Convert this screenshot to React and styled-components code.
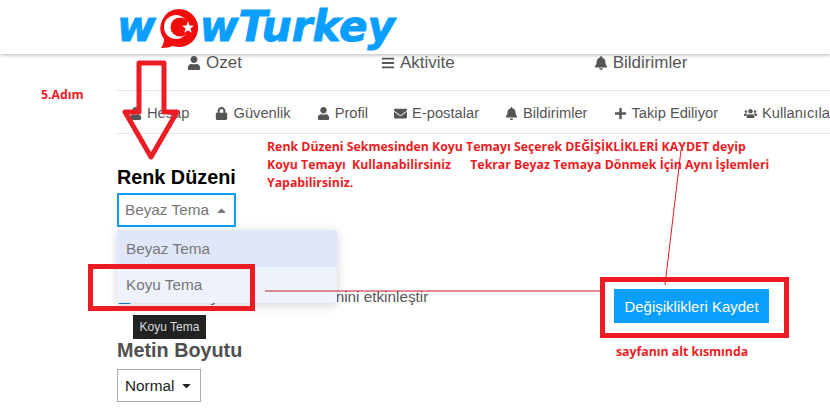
import styled, { createGlobalStyle } from "styled-components";
import { FaUser, FaBars, FaBell, FaLock, FaEnvelope, FaPlus, FaUsers, FaCaretUp, FaCaretDown, FaInfo } from "react-icons/fa";

const GlobalStyle = createGlobalStyle`
  html, body {
    margin: 0;
    padding: 0;
    background: #fff;
    font-family: "Liberation Sans", Arial, sans-serif;
  }
`;

const Page = styled.div`
  position: relative;
  width: 830px;
  height: 418px;
  overflow: hidden;
  background: #fff;
`;

const Header = styled.header`
  height: 54px;
  padding-left: 117px;
  display: flex;
  align-items: center;
  box-shadow: 0 1px 4px rgba(0, 0, 0, 0.3);
`;

const Logo = styled.div`
  display: flex;
  align-items: center;
  color: #0a9eff;
  font-family: "DejaVu Sans", sans-serif;
  font-size: 42px;
  font-weight: 700;
  font-style: italic;
  line-height: 50px;
  -webkit-text-stroke: 1px #0a9eff;
`;

const LogoMark = styled.svg`
  flex-shrink: 0;
  margin-top: 1px;
`;

const TabBar = styled.nav`
  height: 35px;
  padding: 1px 0 0 187px;
  display: flex;
  gap: 139px;
  white-space: nowrap;
`;

const Tab = styled.div`
  display: flex;
  align-items: center;
  gap: 5px;
  height: 15px;
  color: #555;
  font-size: 17px;

  svg {
    font-size: 14px;
  }
`;

const SubBar = styled.nav`
  margin-left: 117px;
  height: 40px;
  padding: 2px 0 0 12px;
  display: flex;
  align-items: center;
  gap: 26px;
  border-top: 1px solid #e6e6e6;
  border-bottom: 1px solid #e6e6e6;
  white-space: nowrap;
`;

const SubItem = styled.div`
  display: flex;
  align-items: center;
  gap: 5px;
  color: #555;
  font-size: 14.7px;

  svg {
    flex-shrink: 0;
    font-size: 13px;
  }
`;

const Main = styled.main`
  display: flex;
  justify-content: space-between;
  padding: 33px 61px 0 117px;
`;

const Settings = styled.div`
  display: flex;
  flex-direction: column;
  align-items: flex-start;
`;

const SaveColumn = styled.div`
  padding-top: 122px;
`;

const Heading = styled.h2`
  margin: 0 0 ${(p) => (p.$muted ? "9px" : "6px")};
  font-size: 19.8px;
  font-weight: 700;
  line-height: 20px;
  color: ${(p) => (p.$muted ? "#4f4f4f" : "#000")};
`;

const Select = styled.div`
  position: relative;
  box-sizing: border-box;
  display: inline-flex;
  align-items: center;
  gap: 6px;
  height: ${(p) => (p.$open ? "34px" : "33px")};
  padding: 0 ${(p) => (p.$open ? "6px" : "7px")};
  font-size: 15.3px;
  color: ${(p) => (p.$open ? "#777" : "#222")};
  border: ${(p) => (p.$open ? "2px solid #0a9eff" : "1px solid #aaa")};

  svg {
    font-size: 13px;
  }
`;

const Menu = styled.ul`
  position: absolute;
  top: 35px;
  left: -2px;
  width: 220px;
  margin: 0;
  padding: 0;
  list-style: none;
  box-shadow: 0 2px 10px rgba(0, 0, 0, 0.18);
  z-index: 2;
`;

const MenuItem = styled.li`
  height: ${(p) => (p.$active ? "37px" : "36px")};
  padding-left: 9px;
  display: flex;
  align-items: center;
  font-size: 15.3px;
  color: #777;
  background: ${(p) => (p.$active ? "#e1e7fa" : "#eef2fd")};
`;

const OptionRow = styled.div`
  display: flex;
  align-items: center;
  gap: 4px;
  margin-top: 62px;
  height: 16px;
  font-size: 15.3px;
  color: #555;
  white-space: nowrap;
`;

const Checkbox = styled.span`
  width: 13px;
  height: 14px;
  margin-left: 1px;
  border-radius: 2px;
  background: #0a7fe0;
`;

const Section = styled.section`
  margin-top: 35px;
`;

const Tooltip = styled.div`
  position: absolute;
  left: 133px;
  top: 315px;
  width: 73px;
  height: 24px;
  display: flex;
  align-items: center;
  justify-content: center;
  font-size: 12px;
  color: #ddd;
  background: #222;
  z-index: 3;
`;

const SaveButton = styled.button`
  display: block;
  width: 155px;
  height: 34px;
  padding: 0;
  border: 0;
  color: #fff;
  background: #0a9eff;
  font-family: "Liberation Sans", Arial, sans-serif;
  font-size: 15px;
`;

const Note = styled.div`
  position: absolute;
  left: ${(p) => p.$x}px;
  top: ${(p) => p.$y}px;
  color: #ed1c24;
  font-family: "Open Sans", sans-serif;
  font-size: 12.3px;
  font-weight: 700;
  line-height: 18px;
  white-space: pre;
  z-index: 5;
`;

const RedBox = styled.div`
  position: absolute;
  box-sizing: border-box;
  left: ${(p) => p.$x}px;
  top: ${(p) => p.$y}px;
  width: ${(p) => p.$w}px;
  height: ${(p) => p.$h}px;
  border: 5px solid #ed1c24;
  z-index: 4;
`;

const Overlay = styled.svg`
  position: absolute;
  left: 0;
  top: 0;
  z-index: 4;
  pointer-events: none;
`;

const tabs = [
  [FaUser, "Ozet"],
  [FaBars, "Aktivite"],
  [FaBell, "Bildirimler"],
  [FaInfo, ""],
];

const subItems = [
  [FaUser, "Hesap"],
  [FaLock, "Güvenlik"],
  [FaUser, "Profil"],
  [FaEnvelope, "E-postalar"],
  [FaBell, "Bildirimler"],
  [FaPlus, "Takip Ediliyor"],
  [FaUsers, "Kullanıcılar"],
];

function LogoBubble() {
  return (
    <LogoMark width="44" height="40" viewBox="0 0 44 40">
      <path d="M23 1a19 19 0 1 1-6 37c-3 1-7 2-12 2 2-3 3-6 3-9A19 19 0 0 1 23 1z" fill="#f20d0d" stroke="none" />
      <circle cx="20" cy="19" r="12" fill="#fff" />
      <circle cx="24" cy="19" r="9.5" fill="#f20d0d" />
      <path d="M32 13l1.5 4.5 4.5.2-3.6 2.7 1.3 4.4-3.7-2.6-3.7 2.6 1.3-4.4-3.6-2.7 4.5-.2z" fill="#fff" />
    </LogoMark>
  );
}

export default function App() {
  return (
    <Page>
      <GlobalStyle />
      <Header>
        <Logo>
          w<LogoBubble />wTurkey
        </Logo>
      </Header>
      <TabBar>
        {tabs.map(([Icon, label], i) => (
          <Tab key={i}>
            <Icon />
            {label}
          </Tab>
        ))}
      </TabBar>
      <SubBar>
        {subItems.map(([Icon, label]) => (
          <SubItem key={label}>
            <Icon />
            {label}
          </SubItem>
        ))}
      </SubBar>
      <Main>
        <Settings>
          <Heading>Renk Düzeni</Heading>
          <Select $open>
            Beyaz Tema
            <FaCaretUp />
            <Menu>
              <MenuItem $active>Beyaz Tema</MenuItem>
              <MenuItem>Koyu Tema</MenuItem>
            </Menu>
          </Select>
          <OptionRow>
            <Checkbox />
            Tam ekran yazı alanı tüm metnini etkinleştir
          </OptionRow>
          <Section>
            <Heading $muted>Metin Boyutu</Heading>
            <Select>
              Normal
              <FaCaretDown />
            </Select>
          </Section>
        </Settings>
        <SaveColumn>
          <SaveButton>Değişiklikleri Kaydet</SaveButton>
        </SaveColumn>
      </Main>

      <Tooltip>Koyu Tema</Tooltip>

      <RedBox $x={88} $y={264} $w={167} $h={47} />
      <RedBox $x={600} $y={277} $w={189} $h={61} />

      <Overlay width="830" height="418" viewBox="0 0 830 418">
        <path d="M139 63h25v49h13l-26 45-26-45h14z" fill="none" stroke="#ed1c24" strokeWidth="5" strokeLinejoin="round" />
        <line x1="265" y1="291" x2="600" y2="291" stroke="#c0202a" strokeWidth="1" />
        <line x1="681" y1="150" x2="665" y2="285" stroke="#ed1c24" strokeWidth="1" />
      </Overlay>

      <Note $x={41} $y={86}>5.Adım</Note>
      <Note $x={267} $y={138}>
        {"Renk Düzeni Sekmesinden Koyu Temayı Seçerek DEĞİŞİKLİKLERİ KAYDET deyip\nKoyu Temayı  Kullanabilirsiniz      Tekrar Beyaz Temaya Dönmek İçin Aynı İşlemleri\nYapabilirsiniz."}
      </Note>
      <Note $x={616} $y={343}>sayfanın alt kısmında</Note>
    </Page>
  );
}
